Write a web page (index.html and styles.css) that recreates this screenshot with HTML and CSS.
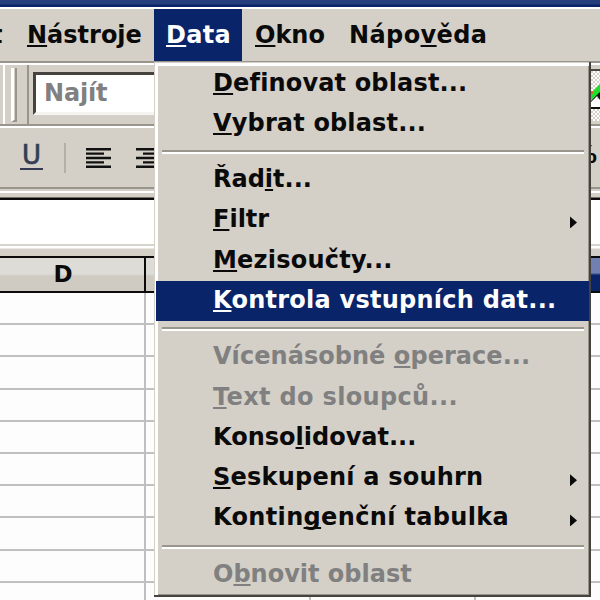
FILE: index.html
```
<!DOCTYPE html>
<html lang="cs">
<head>
<meta charset="utf-8">
<title>Data</title>
<link rel="stylesheet" href="styles.css">
</head>
<body>
<div class="window">
  <div class="titlebar"></div>
  <nav class="menubar">
    <span class="top-item clipped">t</span>
    <span class="top-item tools"><u>N</u>ástroje</span>
    <span class="top-item open"><u>D</u>ata</span>
    <span class="top-item okno"><u>O</u>kno</span>
    <span class="top-item help">Nápo<u>v</u>ěda</span>
  </nav>
  <div class="toolbar find-bar">
    <div class="stub"></div>
    <div class="grip"></div>
    <div class="find-wrap"><div class="find">Najít</div></div>
    <svg class="check" width="11" height="59" viewBox="0 0 11 59">
      <defs><pattern id="dots" width="4" height="4" patternUnits="userSpaceOnUse"><rect width="4" height="4" fill="#fff"/><rect width="2" height="2" fill="#d4d0c8"/><rect x="2" y="2" width="2" height="2" fill="#d4d0c8"/></pattern></defs>
      <rect y="4" width="11" height="2" fill="#4c4842"/>
      <rect y="6" width="11" height="50" fill="url(#dots)"/>
      <rect y="34" width="11" height="8" fill="#fff"/>
      <rect y="42" width="11" height="2" fill="#111"/>
      <path d="M0 38 11 26V35L8 31 2 37Z" fill="#111"/>
      <path d="M0 30 11 19V27L0 37Z" fill="#1be02c"/>
      <path d="M1 26H4V29H1Z" fill="#d66b20"/>
    </svg>
  </div>
  <div class="toolbar format-bar">
    <span class="underline-btn">U</span>
    <span class="tool-sep"></span>
    <svg class="align" width="25" height="20" viewBox="0 0 25 20"><path d="M0 1.2H25M0 5.6H18M0 10H25M0 14.4H18M0 18.8H25" stroke="#111" stroke-width="2.4"/></svg>
    <svg class="align" width="25" height="20" viewBox="0 0 25 20"><path d="M0 1.2H25M7 5.6H25M0 10H25M7 14.4H25M0 18.8H25" stroke="#111" stroke-width="2.4"/></svg>
    <span class="percent">%</span>
  </div>
  <div class="gap"></div>
  <div class="formula"></div>
  <div class="gap lower"></div>
  <div class="headers"><div class="col-head">D</div><div class="col-head"></div><div class="col-head"></div><div class="col-head selected"></div></div>
  <div class="sheet"></div>
</div>
<div class="menu">
  <div class="item i1"><span><u>D</u>efinovat oblast...</span></div>
  <div class="item i2"><span><u>V</u>ybrat oblast...</span></div>
  <div class="rule"></div>
  <div class="item i3"><span>Řad<u>i</u>t...</span></div>
  <div class="item i4"><span><u>F</u>iltr</span><i class="arrow"></i></div>
  <div class="item i5"><span><u>M</u>ezisoučty...</span></div>
  <div class="item i6 active"><span><u>K</u>ontrola vstupních dat...</span></div>
  <div class="rule"></div>
  <div class="item i7 disabled"><span>Vícenásobné <u>o</u>perace...</span></div>
  <div class="item i8 disabled"><span><u>T</u>ext do sloupců...</span></div>
  <div class="item i9"><span>Konso<u>l</u>idovat...</span></div>
  <div class="item i10"><span><u>S</u>eskupení a souhrn</span><i class="arrow"></i></div>
  <div class="item i11"><span>Kontin<u>g</u>enční tabulka</span><i class="arrow"></i></div>
  <div class="rule"></div>
  <div class="item i12 disabled"><span>O<u>b</u>novit oblast</span></div>
</div>
</body>
</html>
```
FILE: styles.css
```
* { box-sizing: border-box; }
body {
  margin: 0;
  width: 600px;
  height: 600px;
  overflow: hidden;
  position: relative;
  font: bold 24px/40px "DejaVu Sans", sans-serif;
  color: #0a0a0a;
  background: #d4d0c8;
}
u { text-decoration: underline; text-decoration-thickness: 2px; text-underline-offset: 2px; text-decoration-skip-ink: none; }
.window { width: 600px; height: 600px; overflow: hidden; display: flex; flex-direction: column; }
.window > * { flex: none; }
.titlebar { height: 9px; background: linear-gradient(#243f7c 0 4px, #0a246a 5px 7px, #fff 7px); }
.menubar { height: 54px; display: flex; border-bottom: 2px solid #9a958c; white-space: nowrap; }
.top-item { height: 52px; line-height: 52px; }
.clipped { width: 27px; text-indent: -9px; }
.tools { width: 127px; }
.open { width: 88px; padding-left: 12px; letter-spacing: .3px; background: #0a246a; color: #fff; }
.okno { width: 95px; padding-left: 13px; }
.help { padding-left: 12px; letter-spacing: .4px; }
.toolbar { display: flex; border-top: 2px solid #fff; border-bottom: 2px solid #9a958c; }
.find-bar { height: 63px; }
.stub { width: 5px; border-right: 2px solid #fff; }
.grip { width: 6px; height: 54px; margin: 3px 10px 0 6px; border-left: 3px solid #fff; border-right: 2px solid #9a958c; border-bottom: 2px solid #9a958c; }
.find-wrap { flex: 1; border-left: 2px solid #9a958c; padding: 7px 0 0 4px; }
.find { width: 200px; height: 43px; padding-left: 8px; line-height: 37px; color: #808080; letter-spacing: -.2px; background: #fff; border: solid #46423d; border-width: 3px 0 0 3px; border-bottom: 3px solid #f6f4f0; }
.check { width: 11px; }
.format-bar { height: 63px; align-items: center; }
.underline-btn { width: 23px; margin: -3px 21px 0 20px; height: 27px; line-height: 25px; border-bottom: 2px solid #343c55; color: #343c55; font-weight: normal; font-size: 26px; text-align: center; -webkit-text-stroke: .7px #343c55; }
.tool-sep { width: 2px; height: 30px; margin-right: 20px; background: #b4b0a8; }
.align { margin-right: 25px; }
.percent { margin-left: auto; width: 16px; text-indent: -11px; margin-top: -5px; white-space: nowrap; overflow: hidden; }
.gap { height: 12px; background: linear-gradient(#d4d0c8 2px, #fff 2px 4px, #d4d0c8 4px 8px, #0b0b0b 9px 11px, #fff 11px); }
.formula { height: 43px; background: #fff; }
.lower { background: linear-gradient(#d8d5ce 2px, #fff 2px 4px, #d4d0c8 5px); }
.headers { height: 37px; display: flex; border-top: 2px solid #0b0b0b; border-bottom: 2px solid #0b0b0b; }
.col-head { width: 165px; flex: none; border-right: 2px solid #0b0b0b; line-height: 33px; font-size: 23px; text-align: center; background: linear-gradient(#dedcd7 0 48%, #cfcbc3 55%); }
.col-head:first-child { width: 146px; padding-right: 18px; }
.selected { background: linear-gradient(#6f80b1 45%, #0a246a 52%); }
.sheet { flex: 1 !important; background: linear-gradient(90deg, transparent 144px, #bfbfbf 144px 146px, transparent 146px 309px, #bfbfbf 309px 311px, transparent 311px 474px, #bfbfbf 474px 476px, transparent 476px), repeating-linear-gradient(#fdfdfd 0 30.2px, #c0c0c0 30.2px 32.2px); }
.menu {
  position: absolute;
  left: 154px; top: 62px; width: 437px; height: 535px;
  padding: 1.5px 3px 0 2px;
  background: #d4d0c8;
  border-right: 2px solid #46423d;
  border-bottom: 2px solid #46423d;
  box-shadow: inset 1px 1px #d4d0c8, inset 4px 4px #fff, inset -1px -1px #9a958c;
}
.item { height: 40.3px; line-height: 39px; display: flex; justify-content: space-between; padding: 0 9px 0 57px; white-space: nowrap; }
.i1, .i2 { letter-spacing: .16px; }
.i5 { letter-spacing: .22px; }
.i6 { letter-spacing: .25px; }
.i7 { letter-spacing: .05px; }
.i8 { letter-spacing: .34px; }
.i10 { letter-spacing: .22px; }
.i11 { letter-spacing: .34px; }
.active { background: #0a246a; color: #fff; margin-right: -3px; }
.disabled { color: #808080; }
.rule { height: 16px; margin: 0 2px 0 6px; background: linear-gradient(transparent 6px, #9a958c 6px 8px, #fff 8px 10px, transparent 10px); }
.arrow { width: 7px; height: 12px; margin-top: 16px; background: #0a0a0a; clip-path: polygon(0 0, 100% 50%, 0 100%); }
```
